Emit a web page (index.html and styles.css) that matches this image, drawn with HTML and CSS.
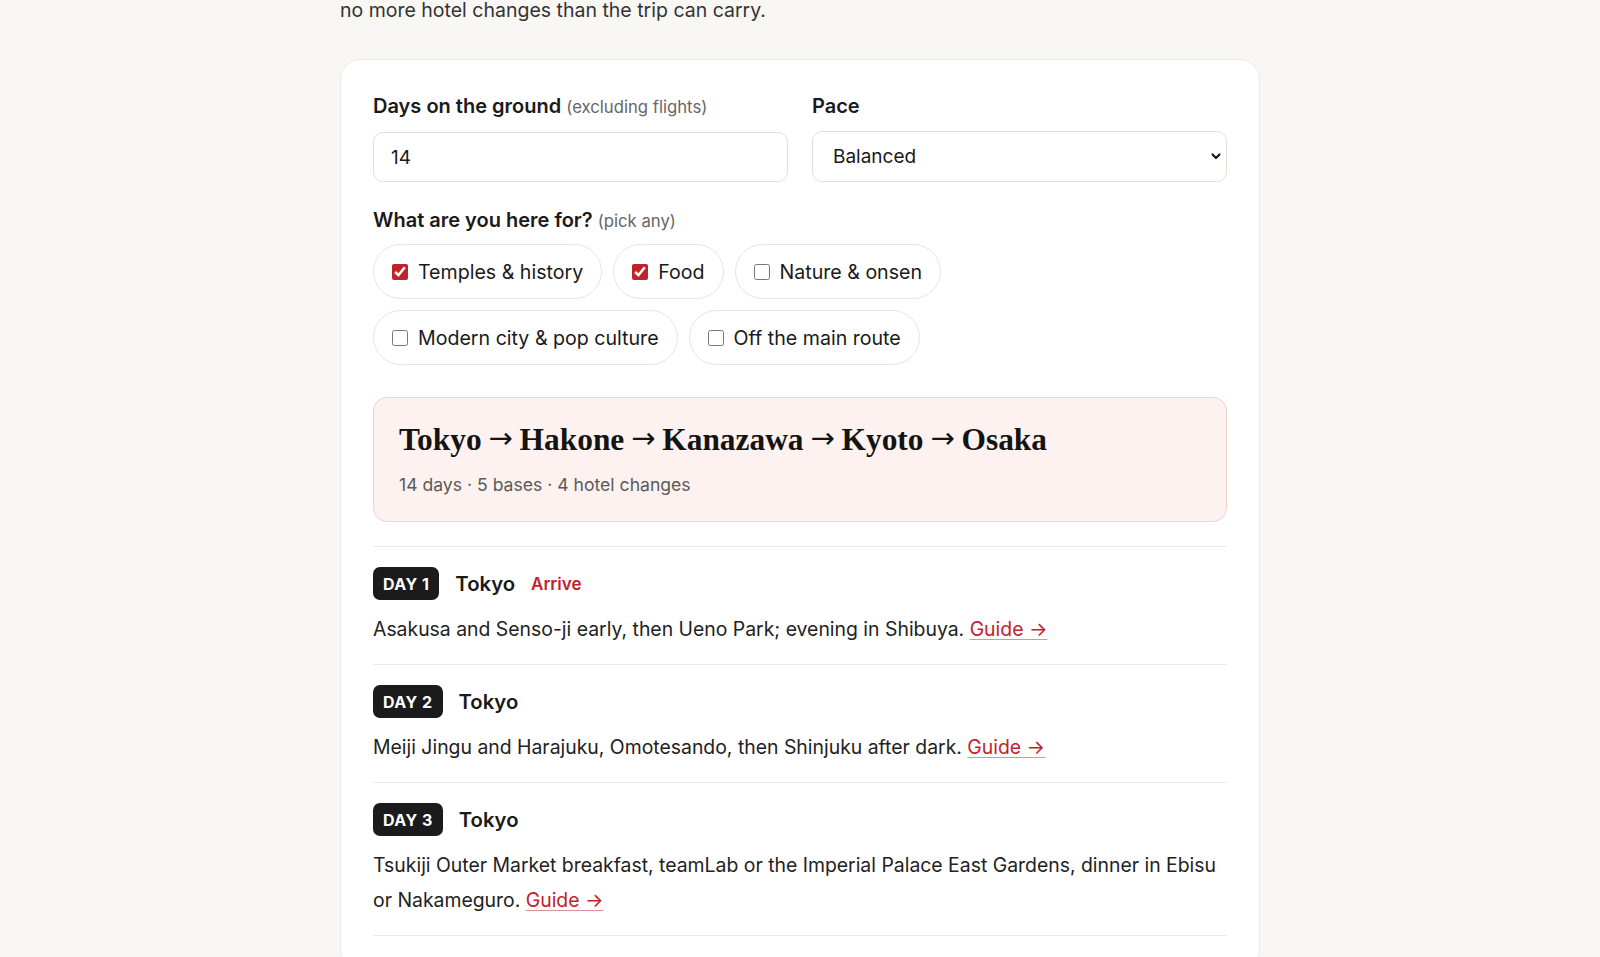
FILE: index.html
```html
<!DOCTYPE html>
<html lang="en">
<head>
<meta charset="utf-8">
<title>Japan route planner</title>
<link rel="stylesheet" href="styles.css">
</head>
<body>
<main class="page">
  <p class="intro">no more hotel changes than the trip can carry.</p>

  <section class="card">
    <div class="fields">
      <div class="field">
        <label class="label" for="days">Days on the ground <span class="hint">(excluding flights)</span></label>
        <input class="input" id="days" type="text" value="14">
      </div>
      <div class="field">
        <label class="label" for="pace">Pace</label>
        <div class="select-wrap">
          <select class="select" id="pace">
            <option>Relaxed</option>
            <option selected>Balanced</option>
            <option>Packed</option>
          </select>
          <svg class="chevron" viewBox="0 0 12 12" width="12" height="12" aria-hidden="true"><path d="M2.5 4.5 L6 8 L9.5 4.5" fill="none" stroke="#1a1a1a" stroke-width="2.2" stroke-linecap="round" stroke-linejoin="round"/></svg>
        </div>
      </div>
    </div>

    <div class="interests">
      <div class="label">What are you here for? <span class="hint">(pick any)</span></div>
      <div class="pills">
        <label class="pill"><input type="checkbox" checked> Temples &amp; history</label>
        <label class="pill"><input type="checkbox" checked> Food</label>
        <label class="pill"><input type="checkbox"> Nature &amp; onsen</label>
        <label class="pill"><input type="checkbox"> Modern city &amp; pop culture</label>
        <label class="pill"><input type="checkbox"> Off the main route</label>
      </div>
    </div>

    <div class="summary">
      <h2 class="route">Tokyo <span class="arr">→</span> Hakone <span class="arr">→</span> Kanazawa <span class="arr">→</span> Kyoto <span class="arr">→</span> Osaka</h2>
      <p class="meta">14 days · 5 bases · 4 hotel changes</p>
    </div>

    <ol class="days">
      <li class="day">
        <div class="day-head"><span class="badge">DAY 1</span><span class="city">Tokyo</span><span class="tag">Arrive</span></div>
        <p class="plan">Asakusa and Senso-ji early, then Ueno Park; evening in Shibuya. <a class="guide" href="#">Guide →</a></p>
      </li>
      <li class="day">
        <div class="day-head"><span class="badge">DAY 2</span><span class="city">Tokyo</span></div>
        <p class="plan">Meiji Jingu and Harajuku, Omotesando, then Shinjuku after dark. <a class="guide" href="#">Guide →</a></p>
      </li>
      <li class="day">
        <div class="day-head"><span class="badge">DAY 3</span><span class="city">Tokyo</span></div>
        <p class="plan">Tsukiji Outer Market breakfast, teamLab or the Imperial Palace East Gardens, dinner in Ebisu or Nakameguro. <a class="guide" href="#">Guide →</a></p>
      </li>
    </ol>
  </section>
</main>
</body>
</html>
```
FILE: styles.css
```css
* { box-sizing: border-box; }

html, body {
  margin: 0;
  background: #f8f7f4;
  color: #1c1c1c;
  font-family: Inter, "Noto Sans", "Liberation Sans", sans-serif;
}

.page {
  width: 920px;
  margin: 0 auto;
}

.intro {
  margin: -5px 0 0;
  font-size: 19.5px;
  line-height: 30px;
  color: #333;
}

.card {
  margin-top: 34px;
  background: #fff;
  border: 1px solid #ebe8e2;
  border-radius: 20px;
  padding: 32px;
}

.fields {
  display: grid;
  grid-template-columns: 1fr 1fr;
  gap: 24px;
}

.label {
  display: block;
  font-size: 20px;
  font-weight: 600;
  line-height: 28px;
  margin-bottom: 11px;
  color: #1a1a1a;
}

.hint {
  font-size: 16.7px;
  font-weight: 400;
  color: #666;
}

.input,
.select {
  display: block;
  width: 100%;
  height: 50px;
  border: 1px solid #e3e0da;
  border-radius: 10px;
  background: #fff;
  font-family: inherit;
  font-size: 19px;
  color: #1a1a1a;
  padding: 0 17px;
  outline: none;
}

.select-wrap {
  position: relative;
}

.select {
  appearance: none;
  -webkit-appearance: none;
  padding-left: 20px;
  height: 51px;
}

.chevron {
  position: absolute;
  right: 5px;
  top: 19px;
  pointer-events: none;
}

.interests {
  margin-top: 24px;
}

.interests .label {
  margin-bottom: 9px;
}

.pills {
  display: flex;
  flex-wrap: wrap;
  gap: 11px;
}

.pill {
  display: inline-flex;
  align-items: center;
  gap: 10px;
  height: 55px;
  padding: 0 18px;
  border: 1px solid #e8e5df;
  border-radius: 999px;
  font-size: 19.6px;
  color: #1a1a1a;
  background: #fff;
}

.pill input {
  width: 16px;
  height: 16px;
  margin: 0;
  accent-color: #c1232b;
}

.summary {
  margin-top: 32px;
  background: #fdf2f0;
  border: 1px solid #f5cfcc;
  border-radius: 14px;
  padding: 23px 25px 23px;
}

.route {
  margin: 0;
  font-family: "Liberation Serif", "DejaVu Serif", serif;
  font-weight: 700;
  font-size: 31.4px;
  line-height: 38px;
  color: #141414;
  word-spacing: -1px;
}

.arr {
  font-family: "DejaVu Sans", sans-serif;
  font-weight: 400;
  font-size: 29px;
  position: relative;
  top: -2px;
}

.meta {
  margin: 13px 0 0;
  font-size: 17.6px;
  line-height: 26px;
  color: #5a5a5a;
}

.days {
  list-style: none;
  margin: 24px 0 0;
  padding: 0;
  border-bottom: 1px solid #ebe9e4;
}

.day {
  border-top: 1px solid #ebe9e4;
  padding: 20px 0 17px;
}

.day-head {
  display: flex;
  align-items: center;
  gap: 16px;
}

.badge {
  display: inline-flex;
  align-items: center;
  height: 33px;
  padding: 0 10px;
  border-radius: 7px;
  background: #1b1b1d;
  color: #fff;
  font-size: 16px;
  font-weight: 700;
  letter-spacing: 0.03em;
}

.city {
  font-size: 20.3px;
  font-weight: 600;
  color: #1a1a1a;
}

.tag {
  font-size: 17px;
  font-weight: 600;
  color: #c1232b;
}

.plan {
  margin: 12px 0 0;
  font-size: 19.4px;
  line-height: 35px;
  color: #222;
}

.guide {
  color: #c1232b;
  text-decoration: underline;
  text-decoration-color: rgba(193, 35, 43, 0.5);
  text-underline-offset: 3px;
}
```
